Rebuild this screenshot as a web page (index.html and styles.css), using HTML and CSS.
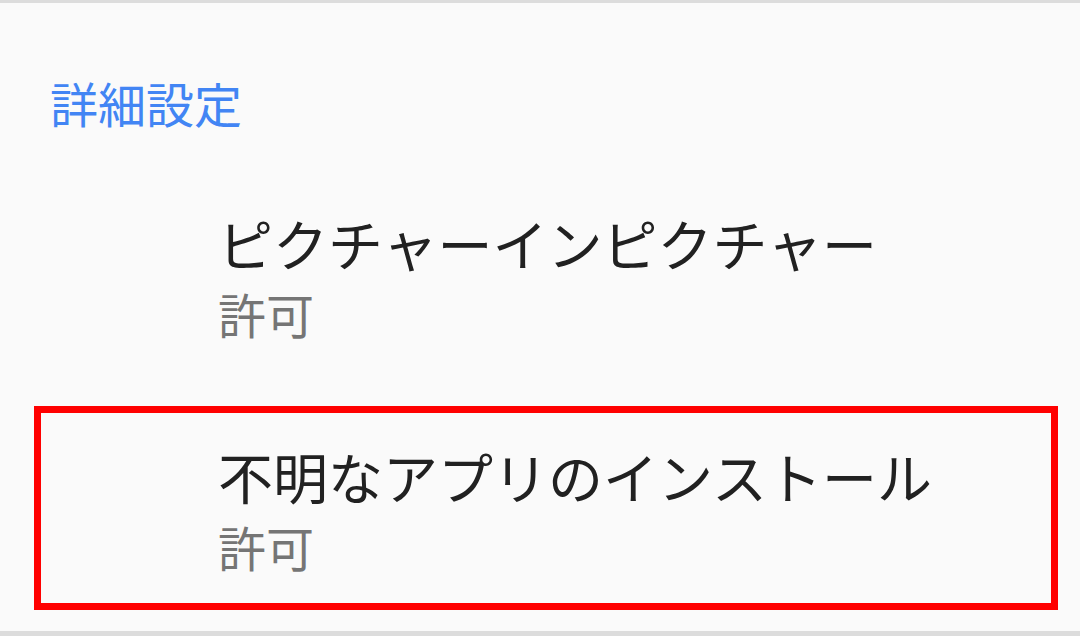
FILE: index.html
```html
<!DOCTYPE html>
<html lang="ja">
<head>
<meta charset="utf-8">
<link rel="stylesheet" href="styles.css">
</head>
<body>
<div class="screen">
  <div class="category">詳細設定</div>
  <div class="item">
    <div class="title">ピクチャーインピクチャー</div>
    <div class="summary">許可</div>
  </div>
  <div class="item item-marked">
    <div class="title">不明なアプリのインストール</div>
    <div class="summary">許可</div>
  </div>
</div>
</body>
</html>
```

FILE: styles.css
```css
html, body {
  margin: 0;
  padding: 0;
  background: #fafafa;
}
body {
  font-family: "Noto Sans CJK JP", "Noto Sans", sans-serif;
}
.screen {
  width: 1080px;
  height: 636px;
  box-sizing: border-box;
  border-top: 3px solid #dcdcdc;
  border-bottom: 5px solid #dcdcdc;
  background: #fafafa;
  display: flex;
  flex-direction: column;
  overflow: hidden;
}
.category {
  font-size: 48px;
  line-height: 64px;
  color: #4285f4;
  padding-left: 50px;
  margin-top: 67px;
}
.item {
  display: flex;
  flex-direction: column;
  padding-left: 218px;
}
.category + .item {
  margin-top: 72px;
}
.title {
  font-size: 55px;
  line-height: 72px;
  color: #212121;
}
.summary {
  font-size: 48px;
  line-height: 60px;
  color: #757575;
  margin-top: 5px;
}
.item-marked {
  margin: 63px 22px 0 34px;
  border: 7px solid #ff0000;
  padding-left: 177px;
  padding-top: 26px;
  height: 204px;
  box-sizing: border-box;
}
```
